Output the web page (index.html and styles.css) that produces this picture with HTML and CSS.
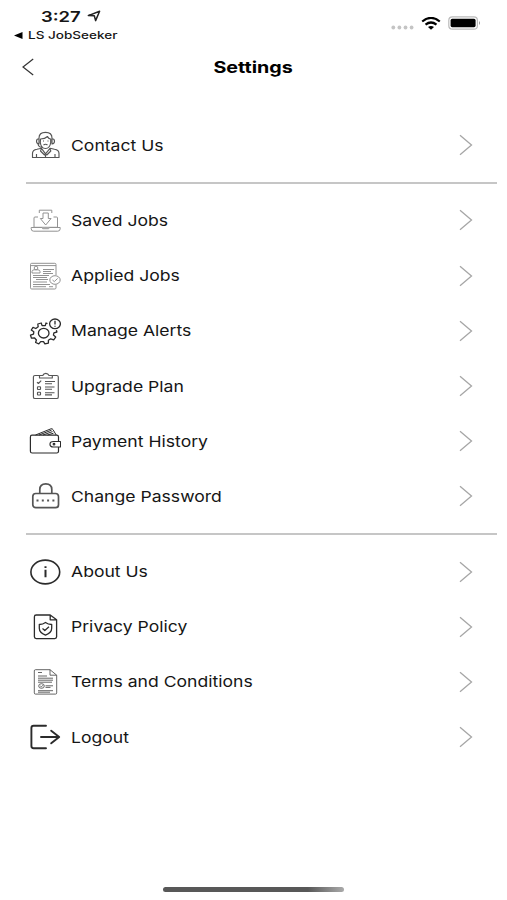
FILE: index.html
```html
<!DOCTYPE html>
<html lang="en">
<head>
  <meta charset="UTF-8" />
  <meta name="viewport" content="width=device-width, initial-scale=1.0"/>
  <title>Settings</title>
  <link rel="stylesheet" href="styles.css">
</head>
<body>
  <div class="status-bar">
    <div class="status-left">
      <div class="time"><span class="wide">3:27</span>
        <svg class="location" width="14" height="12" viewBox="0 0 14 12"><path d="M1.3 5.6 12.6 1.2 8.6 10.6 7.3 5.8Z"/></svg>
      </div>
      <div class="back-app">
        <svg width="9" height="7" viewBox="0 0 9 7"><path d="M0 3.5 8.5 0V7Z"/></svg>
        <span class="wide">LS JobSeeker</span>
      </div>
    </div>
    <div class="status-right">
      <svg class="signal" width="24" height="5" viewBox="0 0 24 5"><circle cx="2.3" cy="2.5" r="1.9"/><circle cx="8.4" cy="2.5" r="1.9"/><circle cx="14.5" cy="2.5" r="1.9"/><circle cx="20.6" cy="2.5" r="1.9"/></svg>
      <svg class="wifi" width="20" height="13" viewBox="0 0 20 13"><path d="M1.2 4.5Q10-2.7 18.8 4.5M4.5 7.6Q10 3.4 15.5 7.6"/><path class="solid" d="M7 9.9Q10 8 13 9.9L10 12.7Z"/></svg>
      <svg class="battery" width="33" height="14" viewBox="0 0 33 14"><rect class="shell" x=".8" y=".8" width="28.6" height="12.4" rx="3.5"/><rect x="2.6" y="2.8" width="25" height="8.4" rx="1.6"/><path class="cap" d="M31 5Q33 7 31 9Z"/></svg>
    </div>
  </div>

  <header class="nav">
    <svg class="back" width="12" height="18" viewBox="0 0 12 18"><path d="M11.2 1 1 9 11.2 17"/></svg>
    <h1 class="wide">Settings</h1>
  </header>

  <main class="menu">
    <a class="item">
      <svg class="icon mid" viewBox="0 0 32 30">
        <path d="M10 12V8Q10 2.3 16.5 2.3T23 8v4M11.5 9Q16 9 18.5 6.5 19.5 9 21.7 9v3.5Q21 18.5 16.5 18.5T11.3 12.5ZM10 8.7Q7.5 8.7 7.5 11.2T10 14ZM23 8.7q2.5 0 2.5 2.5T23 14ZM9 14q.5 3.5 5 3.5M14 11h1M18.5 11h1M14.5 15q2-1.5 4 0"/>
        <path d="M3.5 27.5v-4Q3.5 20 8 19.3l4.5-1 4 5.5 4.5-5.5 4.5 1Q30 20 30 23.5v4ZM12.5 18.5 11.5 21l4 4 1-1.2 1.3 1.2 4-4-1-2.5M7.5 24v3.5M26 24v3.5M16.5 25v2.5"/>
      </svg>
      <span class="label wide">Contact Us</span>
      <svg class="chevron" viewBox="0 0 14 22"><path d="M1 1.2 12.5 11 1 20.8"/></svg>
    </a>

    <hr class="divider">

    <a class="item">
      <svg class="icon light" viewBox="0 0 32 30">
        <path d="M9 12H6Q5 12 5 13v9.3h23.5V13q0-1-1-1h-3M2.2 22.5h10.5l1 1.2h6l1-1.2h10.5v1.2q0 2.5-2.5 2.5H4.7q-2.5 0-2.5-2.5ZM10.3 8V5.2h12.5V8M14 8h5.3v5.5h2.8L16.7 20l-5.4-6.5H14Z"/>
      </svg>
      <span class="label wide">Saved Jobs</span>
      <svg class="chevron" viewBox="0 0 14 22"><path d="M1 1.2 12.5 11 1 20.8"/></svg>
    </a>
    <a class="item">
      <svg class="icon light" viewBox="0 0 32 30">
        <path d="M27 14V3.5Q27 2.3 25.8 2.3H2.7Q1.5 2.3 1.5 3.5v23.3q0 1.2 1.2 1.2h23.1q1.2 0 1.2-1.2V23.5M1.5 4.6H27M3 12V10.5Q3 9 5 8.8h4q2 .2 2 1.7V12ZM14 8.5h11M14 10.5h8M14 12.5h10M4 14.5h16M4 16.5h14M7 18.5h12M4 21h14M4 23.5h17M4 25.7h13M20 25.7h4"/>
        <circle cx="7" cy="7" r="1.8"/><ellipse class="badge" cx="26" cy="19" rx="5.2" ry="4.3"/><path d="m23.5 19 1.8 1.6 3.4-3.2"/>
      </svg>
      <span class="label wide">Applied Jobs</span>
      <svg class="chevron" viewBox="0 0 14 22"><path d="M1 1.2 12.5 11 1 20.8"/></svg>
    </a>
    <a class="item">
      <svg class="icon dark" viewBox="0 0 32 30">
        <path d="M18.5 7.6 17 7l-.7 2.6-3.2 0L12.2 7 8.8 8l.4 2.8-2.4 1.7L4 11.4 2.3 14l2.5 1.8-.3 2.4-3 1 1 3 3.1-.2 1.8 2-.8 2.5 3.2 1.3 1.9-2.2h2.8l1.4 2.3 3.5-.8v-2.8l2.3-1.5 3 1 2-2.7-2.3-2 .5-2.3 3-.8-.5-1.8"/>
        <ellipse cx="14.7" cy="17.2" rx="5.3" ry="4.8"/><ellipse cx="26" cy="7.8" rx="5.4" ry="4.8"/><path d="M26 4.8v3.6M26 9.8v1"/>
      </svg>
      <span class="label wide">Manage Alerts</span>
      <svg class="chevron" viewBox="0 0 14 22"><path d="M1 1.2 12.5 11 1 20.8"/></svg>
    </a>
    <a class="item">
      <svg class="icon mid" viewBox="0 0 32 30">
        <path d="M10.5 4.5H6q-1.6 0-1.6 1.6v19.8q0 1.6 1.6 1.6h21.7q1.6 0 1.6-1.6V6.1q0-1.6-1.6-1.6H23M10.5 7V4.5h3.3Q14.5 2.3 16.8 2.3T20 4.5h3.3V7ZM8 11.2l1.4 1.3 2.8-2.8M16 10.5h10M16 12.7h7M16 16h9.5M16 18.2h7M16 21.7h9.5M16 23.9h7"/>
        <rect x="8.5" y="15.7" width="3" height="2.8" rx=".5"/><rect x="8.5" y="21.2" width="3" height="2.8" rx=".5"/>
      </svg>
      <span class="label wide">Upgrade Plan</span>
      <svg class="chevron" viewBox="0 0 14 22"><path d="M1 1.2 12.5 11 1 20.8"/></svg>
    </a>
    <a class="item">
      <svg class="icon dark thin" viewBox="0 0 32 30">
        <path d="M29.5 15.5V11Q29.5 9.2 27.7 9.2H3Q1.4 9.2 1.4 11v14.2Q1.4 27 3.2 27h24.5q1.8 0 1.8-1.8V21M31 15.5H24.5Q21 15.5 21 18.2T24.5 21H31q.6 0 .6-.6v-4.3q0-.6-.6-.6Z"/>
        <path class="notes" d="M6.5 9 22 2.8q1.3-.4 2 .8L27.2 9M10 9 22.5 4.2M14 9l9.5-3.4M18.5 9l6-1.8"/>
        <circle cx="25" cy="18.2" r=".8"/>
      </svg>
      <span class="label wide">Payment History</span>
      <svg class="chevron" viewBox="0 0 14 22"><path d="M1 1.2 12.5 11 1 20.8"/></svg>
    </a>
    <a class="item">
      <svg class="icon mid bold" viewBox="0 0 32 30">
        <rect x="3.8" y="12.5" width="25.7" height="14.2" rx="3"/><path d="M10.8 12.3V8.5Q10.8 2.8 16.8 2.8T22.8 8.5v3.8"/>
        <path class="dots" d="M7.5 19.5h18.5"/>
      </svg>
      <span class="label wide">Change Password</span>
      <svg class="chevron" viewBox="0 0 14 22"><path d="M1 1.2 12.5 11 1 20.8"/></svg>
    </a>

    <hr class="divider">

    <a class="item">
      <svg class="icon dark info" viewBox="0 0 32 30">
        <ellipse cx="16.3" cy="15" rx="14.4" ry="11.9"/><path class="heavy" d="M16.5 12.8v7.5M16.5 9.2v1.8"/>
      </svg>
      <span class="label wide">About Us</span>
      <svg class="chevron" viewBox="0 0 14 22"><path d="M1 1.2 12.5 11 1 20.8"/></svg>
    </a>
    <a class="item">
      <svg class="icon dark" viewBox="0 0 32 30">
        <path d="M21.2 3H7.2Q5.4 3 5.4 4.8v20Q5.4 26.6 7.2 26.6h18.6q1.8 0 1.8-1.8V7.8ZM21.2 3v4.8h6.4"/>
        <path d="M16.5 10.5q2.5 2 6.2 2v3.7q0 4.4-6.2 7-6.2-2.6-6.2-7v-3.7q3.7 0 6.2-2ZM13.5 16.5l2.3 2 4.2-3.7"/>
      </svg>
      <span class="label wide">Privacy Policy</span>
      <svg class="chevron" viewBox="0 0 14 22"><path d="M1 1.2 12.5 11 1 20.8"/></svg>
    </a>
    <a class="item">
      <svg class="icon mid thin" viewBox="0 0 32 30">
        <path d="M21 2.7H6.5Q5.3 2.7 5.3 3.9v22q0 1.2 1.2 1.2h20q1.2 0 1.2-1.2V8.2ZM21 2.7v5.5h6.7M9 5.5h4M9 9h9M9 11.2h15M9 13.2h15M9 15.2h14M16.5 18.8h7.5M16.5 20.4h5M9 23.7h15M9 25.2h12"/>
        <ellipse cx="12.5" cy="19" rx="2.8" ry="2.3"/><path d="m11.3 19 1 .9 1.7-1.7"/>
      </svg>
      <span class="label wide">Terms and Conditions</span>
      <svg class="chevron" viewBox="0 0 14 22"><path d="M1 1.2 12.5 11 1 20.8"/></svg>
    </a>
    <a class="item">
      <svg class="icon dark logout" viewBox="0 0 32 30">
        <path d="M17 3.8H4.6Q2.4 3.8 2.4 6v18q0 2.2 2.2 2.2H17M12 15h18M22.2 8.7 30.2 15l-8 6.3"/>
      </svg>
      <span class="label wide">Logout</span>
      <svg class="chevron" viewBox="0 0 14 22"><path d="M1 1.2 12.5 11 1 20.8"/></svg>
    </a>
  </main>

  <div class="home-indicator"></div>
</body>
</html>
```
FILE: styles.css
```css
* {
  box-sizing: border-box;
}
body {
  margin: 0;
  height: 900px;
  display: flex;
  flex-direction: column;
  background: #fff;
  color: #161616;
  font-family: Inter, 'Liberation Sans', sans-serif;
  overflow: hidden;
}
svg {
  display: block;
  flex: none;
}
/* extended letterforms */
.wide {
  display: inline-block;
  white-space: nowrap;
  transform: scaleX(1.23);
  transform-origin: left center;
}
.status-bar {
  height: 44px;
  display: flex;
  justify-content: space-between;
  padding: 7px 26px 0 14px;
}
.time {
  display: flex;
  align-items: center;
  height: 18px;
  padding-left: 27px;
  font-size: 15px;
  font-weight: 600;
}
.time .wide {
  width: 46px;
}
.location {
  fill: none;
  stroke: #222;
  stroke-width: 1.5;
  stroke-linejoin: round;
}
.back-app {
  display: flex;
  align-items: center;
  gap: 5px;
  height: 20px;
  font-size: 11px;
  font-weight: 500;
}
.status-right {
  display: flex;
  align-items: flex-start;
  padding-top: 9px;
}
.signal {
  margin: 9px 6px 0 0;
  fill: #c4c4c4;
}
.wifi {
  margin: 1px 7px 0 0;
  fill: none;
  stroke: #000;
  stroke-width: 2.2;
}
.wifi .solid {
  fill: #000;
  stroke: none;
}
.battery .shell {
  fill: #fff;
  stroke: #bbb;
  stroke-width: 1.2;
}
.battery .cap {
  fill: #999;
}
.nav {
  height: 46px;
  display: flex;
  align-items: center;
  justify-content: center;
  padding: 0 22px;
}
.back {
  fill: none;
  stroke: #333;
  stroke-width: 1.2;
}
.nav h1 {
  margin: 0 auto;
  padding-right: 10px;
  font-size: 16px;
  font-weight: 700;
  color: #000;
  transform-origin: center;
}
.menu {
  padding: 27.4px 10px 0 25.5px;
}
.item {
  display: flex;
  align-items: center;
  height: 55.2px;
  padding: 0.6px 24.5px 0 3.5px;
}
.icon {
  width: 32px;
  height: 30px;
  margin-right: 10px;
  fill: none;
  stroke-width: 1.3;
  stroke-linejoin: round;
}
.dark { stroke: #2b2b2b; }
.mid { stroke: #555; stroke-width: 1.15; }
.light { stroke: #929292; stroke-width: 1; }
.dark.thin { stroke-width: 1.2; }
.mid.thin { stroke-width: 0.9; }
.bold { stroke-width: 1.7; }
.info { stroke-width: 1.6; }
.logout { stroke-width: 1.9; stroke-linecap: round; }
.heavy { stroke-width: 2; }
.notes { stroke-width: 1; }
.badge { fill: #fff; }
.dots {
  stroke-width: 2;
  stroke-dasharray: 2 3.3;
}
.label {
  padding-top: 1px;
  font-size: 15px;
  line-height: 20px;
  transform: scaleX(1.172);
}
.chevron {
  width: 14px;
  height: 22px;
  margin-left: auto;
  fill: none;
  stroke: #a6a6a6;
  stroke-width: 1.3;
}
.divider {
  height: 2px;
  margin: 9.4px 0 8.6px;
  border: none;
  background: #c6c6c6;
}
.home-indicator {
  width: 181px;
  height: 5px;
  margin: auto 0 8px 163px;
  border-radius: 3px;
  background: linear-gradient(90deg, #585858 80%, #aaa);
}
```
